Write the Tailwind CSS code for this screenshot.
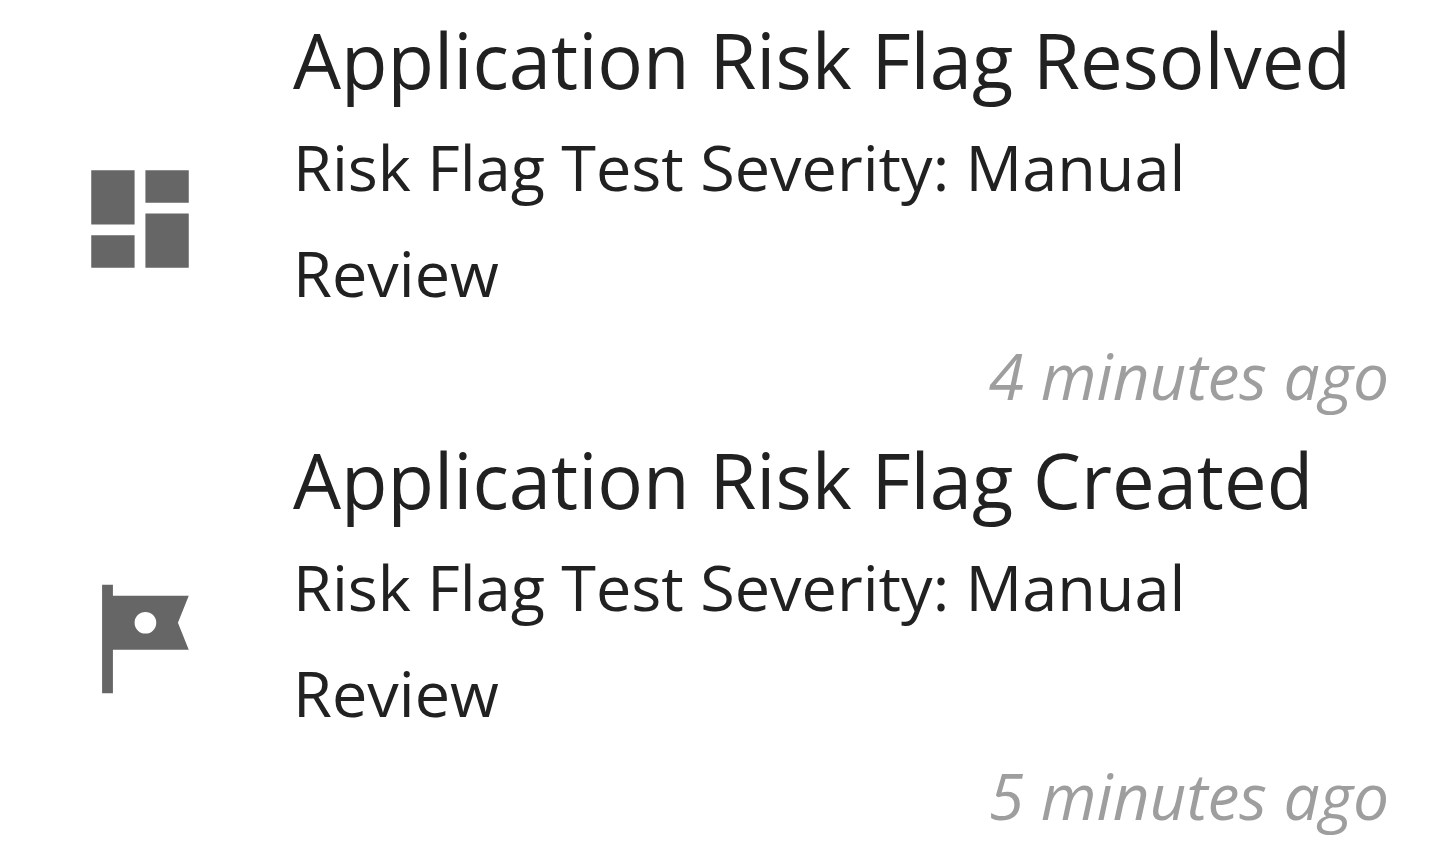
<!DOCTYPE html>
<html lang="en">
<head>
    <meta charset="UTF-8">
    <title>Notifications</title>
    <script src="https://cdn.jsdelivr.net/npm/@tailwindcss/browser@4"></script>
</head>
<body class="bg-white font-['Open_Sans',sans-serif] text-[#212121]">
<ul>
    <li class="flex items-center pr-[62px] pl-[75px]">
        <svg class="mt-[18px] mr-[88px] size-[130px] shrink-0 fill-[#666666]" viewBox="0 0 24 24" aria-hidden="true">
            <path d="M3 13h8V3H3v10zm0 8h8v-6H3v6zm10 0h8V11h-8v10zm0-18v6h8V3h-8z"/>
        </svg>
        <div class="grow">
            <h2 class="pt-1.5 text-[76px] leading-[108px]">Application Risk Flag Resolved</h2>
            <p class="max-w-[1000px] text-[63px] leading-[106px]">Risk Flag Test Severity: Manual Review</p>
            <time class="block pt-1.5 text-right text-[64px] leading-[88px] text-[#9e9e9e] italic">4 minutes ago</time>
        </div>
    </li>
    <li class="flex items-center pr-[62px] pl-[75px]">
        <svg class="mt-[18px] mr-[88px] size-[130px] shrink-0 fill-[#666666]" viewBox="0 0 24 24" aria-hidden="true">
            <path fill-rule="evenodd" d="M21 4H7V2H5v20h2v-8h14l-2-5 2-5zm-6 5a2 2 0 1 1-4 0 2 2 0 0 1 4 0z"/>
        </svg>
        <div class="grow">
            <h2 class="pt-1.5 text-[76px] leading-[108px]">Application Risk Flag Created</h2>
            <p class="max-w-[1000px] text-[63px] leading-[106px]">Risk Flag Test Severity: Manual Review</p>
            <time class="block pt-1.5 text-right text-[64px] leading-[88px] text-[#9e9e9e] italic">5 minutes ago</time>
        </div>
    </li>
</ul>
</body>
</html>
